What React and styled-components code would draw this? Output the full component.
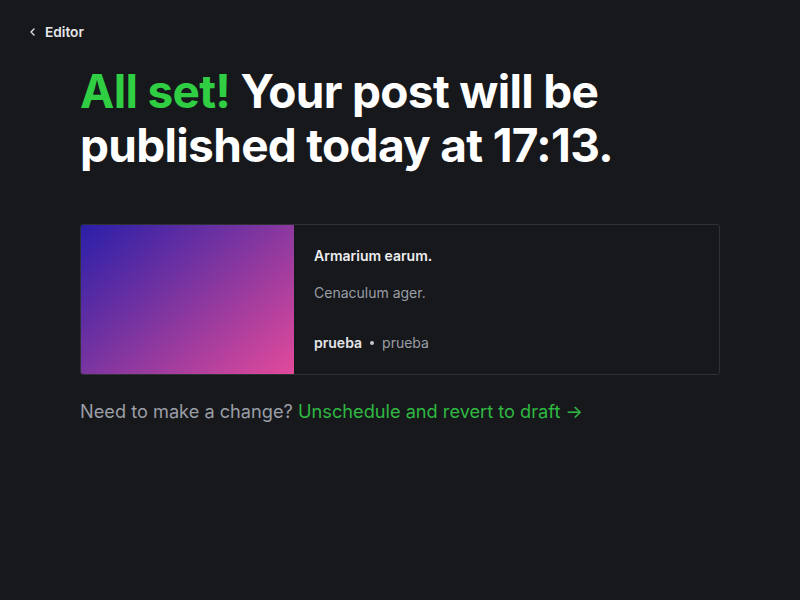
import React from 'react';
import styled, { createGlobalStyle } from 'styled-components';

const GlobalStyle = createGlobalStyle`
  html, body {
    margin: 0;
    padding: 0;
    background: #17181c;
    font-family: Inter, "Noto Sans", sans-serif;
    -webkit-font-smoothing: antialiased;
  }
`;

const Page = styled.div`
  min-height: 600px;
  background: #17181c;
  color: #fff;
  padding: 22px 0 0 0;
  box-sizing: border-box;
`;

const TopBar = styled.div`
  display: flex;
  align-items: center;
  padding: 0 28px;
  height: 20px;
`;

const BackLink = styled.a`
  display: flex;
  align-items: center;
  gap: 7px;
  color: #e5e7ea;
  font-size: 13.7px;
  font-weight: 600;
  text-decoration: none;
  cursor: pointer;
`;

const Content = styled.div`
  padding: 0 80px;
  display: flex;
  flex-direction: column;
`;

const Heading = styled.h1`
  margin: 22px 0 0 0;
  font-size: 46px;
  line-height: 54px;
  font-weight: 700;
  letter-spacing: -0.015em;
  color: #fff;
`;

const Accent = styled.span`
  color: #30cf43;
`;

const Card = styled.div`
  margin-top: 52px;
  display: flex;
  height: 149px;
  border: 1px solid #2f3136;
  border-radius: 3px;
  overflow: hidden;
`;

const Cover = styled.div`
  width: 213px;
  flex-shrink: 0;
  background: linear-gradient(140deg, #2a1fa8 0%, #7a34a0 45%, #e24a9b 100%);
`;

const CardBody = styled.div`
  display: flex;
  flex-direction: column;
  padding: 20px 20px 21px 20px;
`;

const CardTitle = styled.div`
  font-size: 14px;
  font-weight: 600;
  color: #eceef0;
  line-height: 22px;
`;

const Excerpt = styled.div`
  margin-top: 16px;
  font-size: 14px;
  color: #9a9ea6;
  line-height: 20px;
`;

const Meta = styled.div`
  margin-top: auto;
  display: flex;
  align-items: center;
  gap: 8px;
  font-size: 14px;
  line-height: 20px;
`;

const Author = styled.span`
  font-weight: 600;
  color: #e3e5e8;
`;

const Dot = styled.span`
  width: 4px;
  height: 4px;
  border-radius: 50%;
  background: #c5c8cc;
`;

const Tag = styled.span`
  color: #9a9ea6;
`;

const Note = styled.p`
  margin: 23px 0 0 0;
  font-size: 18.2px;
  line-height: 26px;
  color: #9a9ea6;
`;

const GreenLink = styled.a`
  color: #2fb842;
  text-decoration: none;
  cursor: pointer;
`;

export default function App() {
  return (
    <>
      <GlobalStyle />
      <Page>
        <TopBar>
          <BackLink>
            <svg width="10" height="10" viewBox="0 0 10 10" fill="none">
              <path d="M6 2 L3 5 L6 8" stroke="#e5e7ea" strokeWidth="1.3" strokeLinecap="round" strokeLinejoin="round" />
            </svg>
            Editor
          </BackLink>
        </TopBar>
        <Content>
          <Heading>
            <Accent>All set!</Accent> Your post will be published today at 17:13.
          </Heading>
          <Card>
            <Cover />
            <CardBody>
              <CardTitle>Armarium earum.</CardTitle>
              <Excerpt>Cenaculum ager.</Excerpt>
              <Meta>
                <Author>prueba</Author>
                <Dot />
                <Tag>prueba</Tag>
              </Meta>
            </CardBody>
          </Card>
          <Note>
            Need to make a change? <GreenLink>Unschedule and revert to draft →</GreenLink>
          </Note>
        </Content>
      </Page>
    </>
  );
}
